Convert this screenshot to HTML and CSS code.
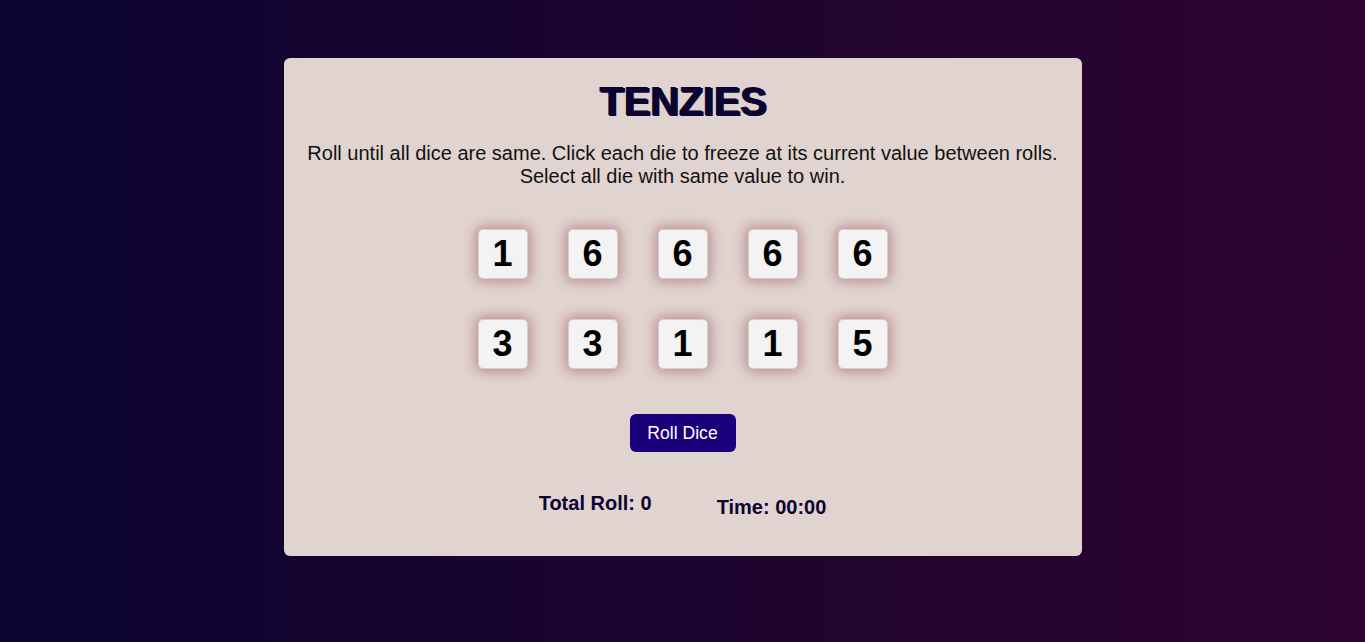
FILE: index.html
```html
<!DOCTYPE html>
<html lang="en">
<head>
<meta charset="utf-8">
<title>Tenzies</title>
<link rel="stylesheet" href="styles.css">
</head>
<body>
<main class="card">
  <h1 class="title">TENZIES</h1>
  <p class="instructions">Roll until all dice are same. Click each die to freeze at its current value between rolls.<br>Select all die with same value to win.</p>
  <div class="dice">
    <div class="die">1</div>
    <div class="die">6</div>
    <div class="die">6</div>
    <div class="die">6</div>
    <div class="die">6</div>
    <div class="die">3</div>
    <div class="die">3</div>
    <div class="die">1</div>
    <div class="die">1</div>
    <div class="die">5</div>
  </div>
  <button class="roll">Roll Dice</button>
  <div class="stats">
    <h3 class="stat">Total Roll: 0</h3>
    <h3 class="stat stat-time">Time: 00:00</h3>
  </div>
</main>
</body>
</html>
```
FILE: styles.css
```css
html, body {
  margin: 0;
  height: 100%;
}
body {
  background: linear-gradient(90deg, #0b0430 0%, #1d0430 50%, #2f0430 100%);
  font-family: "Liberation Sans", Arial, sans-serif;
  display: flex;
  justify-content: center;
  align-items: flex-start;
  padding-top: 58px;
  box-sizing: border-box;
}
.card {
  width: 798px;
  height: 498px;
  box-sizing: border-box;
  background: #e1d3d0;
  border-radius: 6px;
  display: flex;
  flex-direction: column;
  align-items: center;
  padding-top: 20px;
}
.title {
  margin: 0;
  font-size: 40px;
  line-height: 46px;
  font-weight: 900;
  color: #0b0430;
  letter-spacing: -0.3px;
  text-shadow: 1px 1px 0 #0b0430, 2px 1px 0 #0b0430;
}
.instructions {
  margin: 18px 0 0;
  font-size: 20px;
  line-height: 23px;
  text-align: center;
  color: #111;
}
.dice {
  margin-top: 41px;
  display: grid;
  grid-template-columns: repeat(5, 50px);
  gap: 40px;
}
.die {
  width: 50px;
  height: 50px;
  box-sizing: border-box;
  background: #f3f3f3;
  border: 1px solid #d8cccc;
  border-radius: 5px;
  box-shadow: 0 0 12px 3px rgba(130, 50, 50, 0.4);
  display: flex;
  align-items: center;
  justify-content: center;
  font-size: 36px;
  font-weight: 700;
  color: #000;
}
.roll {
  margin-top: 45px;
  width: 106px;
  height: 38px;
  border: none;
  border-radius: 6px;
  background: #1a007a;
  color: #fff;
  font-family: "Liberation Sans", Arial, sans-serif;
  font-size: 17.6px;
  padding: 0;
}
.stats {
  margin-top: 40px;
  display: flex;
  gap: 65px;
  align-items: flex-start;
}
.stat {
  margin: 0;
  font-size: 20px;
  line-height: 23px;
  font-weight: 700;
  color: #0b0430;
}
.stat-time {
  margin-top: 4px;
}
```
